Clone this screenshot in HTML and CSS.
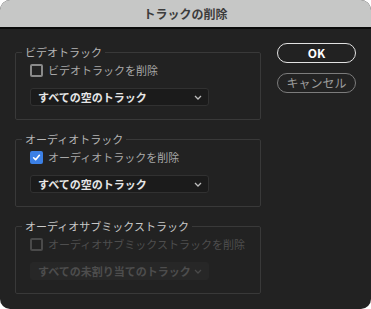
FILE: index.html
```html
<!DOCTYPE html>
<html lang="ja">
<head>
  <meta charset="UTF-8" />
  <title>トラックの削除</title>
  <link rel="stylesheet" href="styles.css">
</head>
<body>
  <div class="window">
    <div class="titlebar">トラックの削除</div>

    <div class="main">
      <div class="sections">

        <!-- ビデオ -->
        <fieldset class="group">
          <legend>ビデオトラック</legend>
          <div class="check-row">
            <span class="box"></span>
            <span>ビデオトラックを削除</span>
          </div>
          <div class="select">
            <span>すべての空のトラック</span>
            <svg class="chev" width="8" height="5" viewBox="0 0 8 5"><path d="M1 1 L4 4 L7 1" fill="none" stroke="currentColor" stroke-width="1.3"/></svg>
          </div>
        </fieldset>

        <!-- オーディオ -->
        <fieldset class="group">
          <legend>オーディオトラック</legend>
          <div class="check-row">
            <span class="box checked">
              <svg width="11" height="11" viewBox="0 0 11 11"><path d="M2 5.8 L4.4 8.2 L9 2.8" fill="none" stroke="#fff" stroke-width="2" stroke-linecap="round" stroke-linejoin="round"/></svg>
            </span>
            <span>オーディオトラックを削除</span>
          </div>
          <div class="select">
            <span>すべての空のトラック</span>
            <svg class="chev" width="8" height="5" viewBox="0 0 8 5"><path d="M1 1 L4 4 L7 1" fill="none" stroke="currentColor" stroke-width="1.3"/></svg>
          </div>
        </fieldset>

        <!-- サブミックス -->
        <fieldset class="group disabled">
          <legend>オーディオサブミックストラック</legend>
          <div class="check-row">
            <span class="box"></span>
            <span>オーディオサブミックストラックを削除</span>
          </div>
          <div class="select">
            <span>すべての未割り当てのトラック</span>
            <svg class="chev" width="8" height="5" viewBox="0 0 8 5"><path d="M1 1 L4 4 L7 1" fill="none" stroke="currentColor" stroke-width="1.3"/></svg>
          </div>
        </fieldset>

      </div>

      <div class="buttons">
        <button class="btn ok">OK</button>
        <button class="btn cancel">キャンセル</button>
      </div>
    </div>
  </div>
</body>
</html>
```

FILE: styles.css
```css
* {
  box-sizing: border-box;
}
body {
  margin: 0;
  background: #ffffff;
  font-family: "Noto Sans CJK JP", "Noto Sans", sans-serif;
}
.window {
  width: 371px;
  height: 309px;
  background: #222222;
  border-radius: 10px;
  overflow: hidden;
}
.titlebar {
  height: 29px;
  background: #c6c7c6;
  border-bottom: 2px solid #0b0b0b;
  text-align: center;
  font-size: 12px;
  font-weight: bold;
  line-height: 27px;
  color: #3c3c3c;
}
.main {
  display: flex;
  gap: 16px;
  padding: 14px 15px 0 15px;
}
.sections {
  width: 246px;
  padding-top: 2px;
  display: flex;
  flex-direction: column;
  gap: 12px;
}
.group {
  margin: 0;
  border: 1px solid #393939;
  border-radius: 2px;
  padding: 4px 14px 13px 14px;
  height: 75px;
}
.group legend {
  margin-left: -8px;
  padding: 0 3px;
  font-size: 11px;
  line-height: 14px;
  color: #b4b4b4;
}
.check-row {
  display: flex;
  align-items: center;
  gap: 5px;
  height: 14px;
  font-size: 11px;
  color: #a8a8a8;
}
.box {
  width: 13px;
  height: 13px;
  border: 2px solid #8a8a8a;
  border-radius: 2px;
  display: flex;
  align-items: center;
  justify-content: center;
}
.box.checked {
  background: #3b80e6;
  border-color: #3b80e6;
}
.select {
  margin-top: 11px;
  width: 179px;
  height: 18px;
  display: flex;
  align-items: center;
  justify-content: space-between;
  padding: 0 6px 0 7px;
  background: #1b1b1b;
  border: 1px solid #313131;
  border-radius: 3px;
  font-size: 11px;
  font-weight: bold;
  color: #e6e6e6;
}
.chev {
  color: #bdbdbd;
}
.group.disabled legend {
  color: #c8c8c8;
}
.group.disabled .check-row {
  color: #4e4e4e;
}
.group.disabled .box {
  border-color: #4a4a4a;
}
.group.disabled .select {
  background: #272727;
  border-color: #272727;
  color: #4d4d4d;
}
.group.disabled .chev {
  color: #494949;
}
.buttons {
  width: 79px;
  display: flex;
  flex-direction: column;
  gap: 10px;
}
.btn {
  height: 20px;
  border-radius: 10px;
  background: transparent;
  font-family: inherit;
  font-size: 12px;
  line-height: 16px;
  padding: 0;
}
.btn.ok {
  border: 1.5px solid #e2e2e2;
  color: #ffffff;
  font-weight: bold;
}
.btn.cancel {
  border: 1.5px solid #7c7c7c;
  color: #9c9c9c;
}
```
